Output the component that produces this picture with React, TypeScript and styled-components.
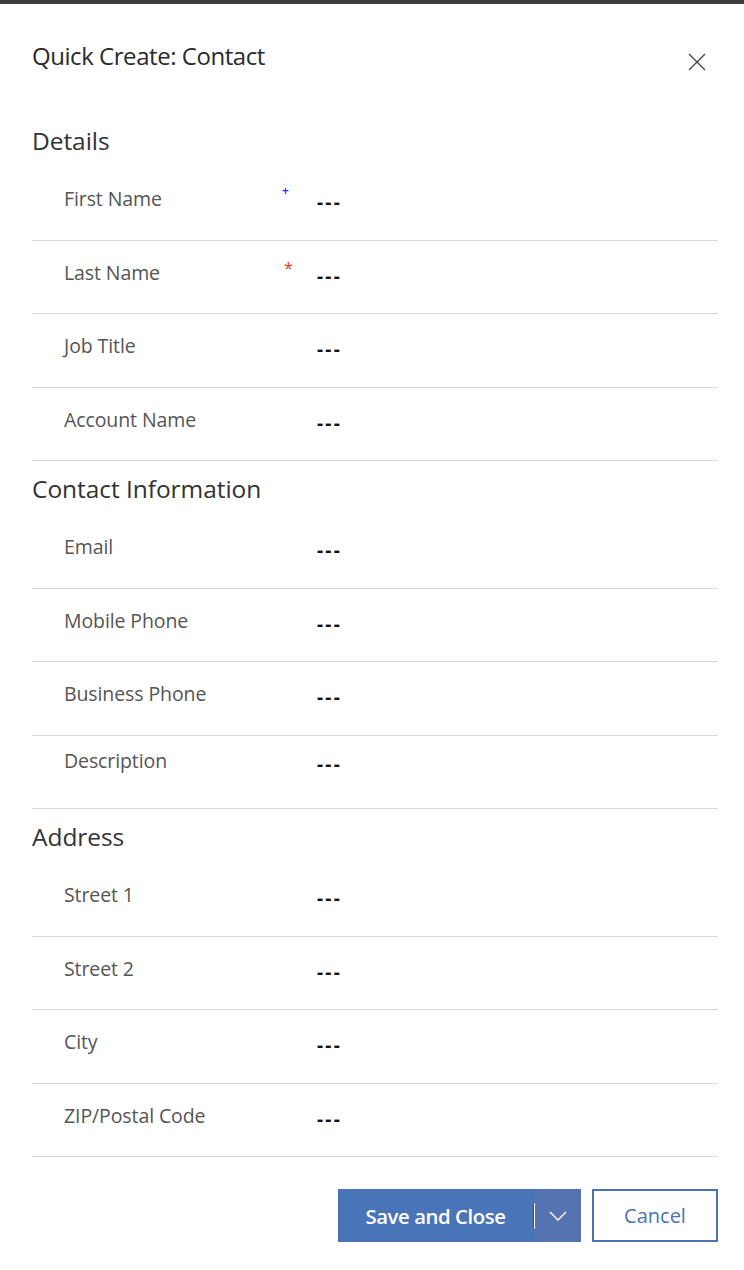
import styled, { createGlobalStyle } from "styled-components";

const GlobalStyle = createGlobalStyle`
	html, body {
		margin: 0;
		padding: 0;
		background: #fff;
	}
	body {
		font-family: "Open Sans", "Liberation Sans", sans-serif;
		color: #333;
	}
`;

interface Field {
	label: string;
	marker?: "required" | "recommended";
	tall?: boolean;
}

interface Section {
	title: string;
	fields: Field[];
}

const sections: Section[] = [
	{
		title: "Details",
		fields: [
			{ label: "First Name", marker: "recommended" },
			{ label: "Last Name", marker: "required" },
			{ label: "Job Title" },
			{ label: "Account Name" },
		],
	},
	{
		title: "Contact Information",
		fields: [
			{ label: "Email" },
			{ label: "Mobile Phone" },
			{ label: "Business Phone" },
			{ label: "Description", tall: true },
		],
	},
	{
		title: "Address",
		fields: [
			{ label: "Street 1" },
			{ label: "Street 2" },
			{ label: "City" },
			{ label: "ZIP/Postal Code" },
		],
	},
];

export default function App() {
	return (
		<>
			<GlobalStyle />
			<Dialog>
				<TopBar />
				<Header>
					<Title>Quick Create: Contact</Title>
					<CloseButton aria-label="Close">
						<svg width="18" height="18" viewBox="0 0 18 18">
							<path d="M1 1 L17 17 M17 1 L1 17" stroke="#444" strokeWidth="1.3" fill="none" />
						</svg>
					</CloseButton>
				</Header>
				<Body>
					{sections.map((section) => (
						<div key={section.title}>
							<SectionTitle>{section.title}</SectionTitle>
							{section.fields.map((field) => (
								<Row key={field.label} $tall={field.tall}>
									<Label>{field.label}</Label>
									<Marker $kind={field.marker}>
										{field.marker === "required" ? "*" : field.marker === "recommended" ? "+" : ""}
									</Marker>
									<Value>---</Value>
								</Row>
							))}
						</div>
					))}
				</Body>
				<Footer>
					<SplitButton>
						<PrimaryPart>Save and Close</PrimaryPart>
						<Divider />
						<ChevronPart aria-label="More">
							<svg width="18" height="10" viewBox="0 0 18 10">
								<path d="M1 1 L9 9 L17 1" stroke="#fff" strokeWidth="1.3" fill="none" />
							</svg>
						</ChevronPart>
					</SplitButton>
					<CancelButton>Cancel</CancelButton>
				</Footer>
			</Dialog>
		</>
	);
}

const Dialog = styled.div`
	width: 744px;
	min-height: 1270px;
	background: #fff;
	display: flex;
	flex-direction: column;
`;

const TopBar = styled.div`
	height: 4px;
	background: #3c3c3c;
`;

const Header = styled.div`
	height: 109px;
	padding: 0 38px 0 32px;
	display: flex;
	justify-content: space-between;
	align-items: flex-start;
	box-sizing: border-box;
`;

const Title = styled.h1`
	margin: 35px 0 0;
	font-size: 24px;
	font-weight: 400;
	line-height: 34px;
	color: #2b2b2b;
	letter-spacing: -0.45px;
`;

const CloseButton = styled.button`
	margin-top: 49px;
	padding: 0;
	border: none;
	background: none;
	width: 18px;
	height: 18px;
	display: flex;
	cursor: pointer;
`;

const Body = styled.div`
	padding: 0 26px 0 32px;
`;

const SectionTitle = styled.h2`
	margin: 0;
	height: 54px;
	display: flex;
	align-items: center;
	font-size: 24.5px;
	font-weight: 400;
	color: #333;
	letter-spacing: -0.05px;
`;

const Row = styled.div<{ $tall?: boolean }>`
	display: grid;
	grid-template-columns: 220px 33px 1fr;
	align-items: start;
	padding: ${({ $tall }) => ($tall ? "11px" : "18px")} 0 0 32px;
	height: 73.5px;
	box-sizing: border-box;
	border-bottom: 1px solid #d8d8d8;
`;

const Label = styled.span`
	font-size: 19.5px;
	line-height: 28px;
	color: #555;
	letter-spacing: -0.1px;
	white-space: nowrap;
`;

const Marker = styled.span<{ $kind?: "required" | "recommended" }>`
	font-size: ${({ $kind }) => ($kind === "recommended" ? "12px" : "16px")};
	line-height: ${({ $kind }) => ($kind === "recommended" ? "12px" : "18px")};
	color: ${({ $kind }) => ($kind === "required" ? "#e0352b" : "#2d21f5")};
	font-weight: ${({ $kind }) => ($kind === "recommended" ? 600 : 400)};
	margin-left: ${({ $kind }) => ($kind === "recommended" ? "-2px" : "0")};
`;

const Value = styled.span`
	font-size: 19px;
	line-height: 28px;
	font-weight: 700;
	color: #111;
	letter-spacing: 2.2px;
	padding-top: 3px;
`;

const Footer = styled.div`
	display: flex;
	justify-content: flex-end;
	gap: 11px;
	padding: 32px 26px 0 0;
`;

const SplitButton = styled.div`
	display: flex;
	height: 53px;
	background: #4a74b8;
`;

const PrimaryPart = styled.button`
	width: 195px;
	border: none;
	background: #4a74b8;
	color: #fff;
	font-family: "Open Sans", "Liberation Sans", sans-serif;
	font-size: 20.3px;
	font-weight: 600;
	letter-spacing: -0.4px;
	cursor: pointer;
	padding: 0;
`;

const Divider = styled.span`
	align-self: center;
	width: 1px;
	height: 26px;
	background: #fff;
	border-left: 1px solid #2f4f8f;
`;

const ChevronPart = styled.button`
	width: 46px;
	border: none;
	background: #5473b0;
	display: flex;
	align-items: center;
	justify-content: center;
	cursor: pointer;
	padding: 0;
`;

const CancelButton = styled.button`
	width: 126px;
	height: 53px;
	box-sizing: border-box;
	border: 2px solid #4a72b5;
	background: #fff;
	color: #4a72b5;
	font-family: "Open Sans", "Liberation Sans", sans-serif;
	font-size: 20px;
	cursor: pointer;
	padding: 0;
`;
